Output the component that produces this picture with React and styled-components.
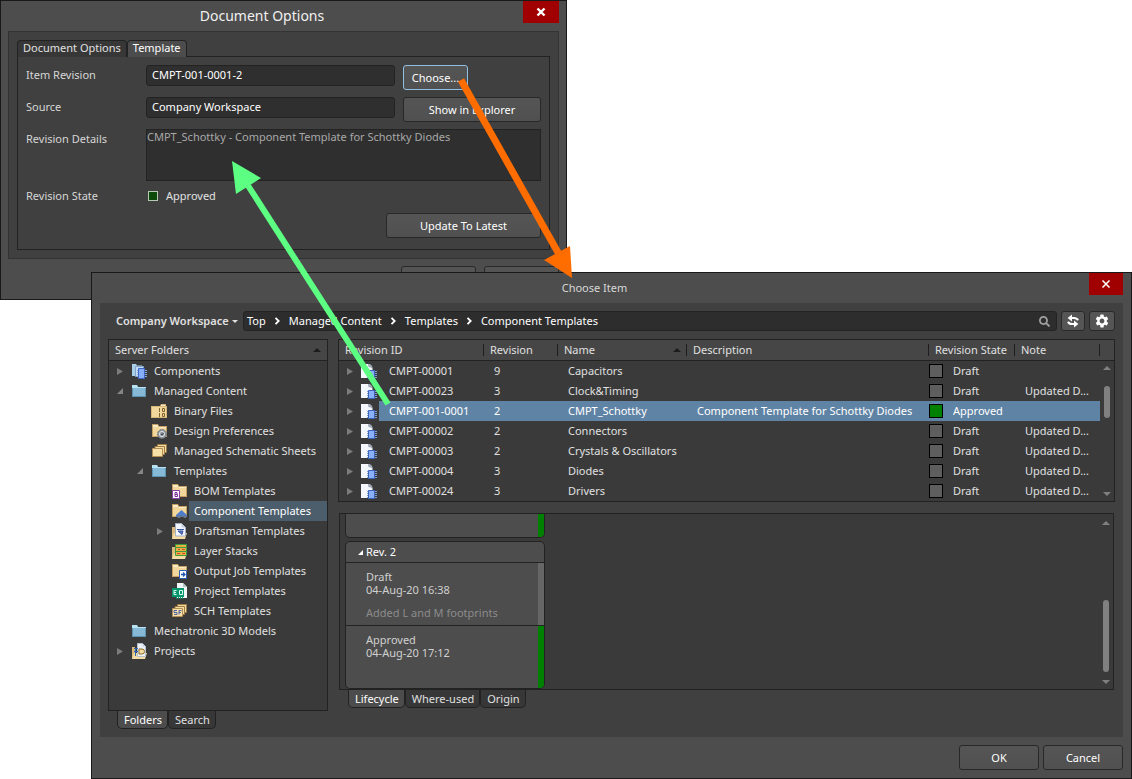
import React from "react";
import styled, { createGlobalStyle } from "styled-components";
import { FaSearch } from "react-icons/fa";
import { MdSettings } from "react-icons/md";

const GlobalStyle = createGlobalStyle`
  * {
    box-sizing: border-box;
  }
  body {
    margin: 0;
    background: #fff;
    color: #e0e0e0;
    font-family: "Noto Sans", "Open Sans", sans-serif;
    font-size: 11px;
    line-height: 14px;
  }
  button, input, textarea {
    font: inherit;
    color: inherit;
    margin: 0;
  }
`;

const Desktop = styled.main`
  position: relative;
  overflow: hidden;
`;

const Dialog = styled.section`
  background: #4d4d4d;
  border: 1px solid #191919;
`;

const OptionsDialog = styled(Dialog)`
  width: 567px;
`;

const ChooseDialog = styled(Dialog)`
  position: relative;
  margin: -28px 0 0 91px;
`;

const TitleBar = styled.header`
  display: flex;
  align-items: flex-start;
  height: 30px;
  padding: 0 ${(p) => p.$right}px 0 ${(p) => p.$left || 0}px;
`;

const Title = styled.h1`
  flex: 1;
  margin: 0;
  text-align: center;
  font-weight: 400;
  font-size: ${(p) => (p.$large ? "14px" : "11px")};
  line-height: 29px;
  color: ${(p) => (p.$large ? "#f0f0f0" : "#d8d8d8")};
`;

const CloseButton = styled.button`
  width: ${(p) => (p.$wide ? "36px" : "34px")};
  height: 22px;
  display: flex;
  align-items: center;
  justify-content: center;
  padding: 0;
  border: 0;
  background: #a00000;
`;

const Panel = styled.div`
  margin: 0 7px;
  padding: 8px;
  background: #404040;
  border: 1px solid #333;
`;

const TabRow = styled.div`
  display: flex;
  padding-left: ${(p) => p.$inset || 0}px;
`;

const Tab = styled.button`
  height: ${(p) => (p.$bottom ? "18px" : "17px")};
  padding: ${(p) => (p.$bottom ? "0 5px 0 6px" : "0 5px 2px")};
  line-height: 14px;
  white-space: nowrap;
  color: ${(p) => (p.$active ? "#fff" : "#e0e0e0")};
  background: ${(p) => (p.$active ? "#4c4c4c" : "#373737")};
  border: 1px solid #222;
  ${(p) =>
    p.$bottom
      ? "border-top: 0; border-radius: 0 0 5px 5px;"
      : "border-bottom: 0; border-radius: 4px 4px 0 0; margin-bottom: -1px;"}
`;

const Form = styled.form`
  display: grid;
  grid-template-columns: 112px 249px 1fr;
  column-gap: 8px;
  row-gap: 7px;
  padding: 8px 8px 11px;
  border: 1px solid #222;
`;

const Label = styled.label`
  line-height: ${(p) => (p.$short ? "16px" : "20px")};
  color: #d6d6d6;
`;

const TextInput = styled.input`
  height: 21px;
  width: 100%;
  padding: 0 5px 2px;
  color: #fff;
  background: #2f2f2f;
  border: 1px solid #232323;
  border-radius: 3px;
`;

const Details = styled.textarea`
  grid-column: 2 / 4;
  display: block;
  width: 100%;
  height: 52px;
  padding: 0;
  resize: none;
  color: #a8a8a8;
  background: #2f2f2f;
  border: 1px solid #232323;
`;

const State = styled.output`
  display: flex;
  align-items: center;
  gap: 8px;
  height: 16px;
  margin-bottom: 2px;
  padding-left: 2px;
`;

const Lamp = styled.span`
  width: 10px;
  height: 10px;
  background: #0c4a0c;
  border: 1px solid #b5c9b5;
`;

const Button = styled.button`
  height: 25px;
  width: ${(p) => (p.$width ? `${p.$width}px` : "100%")};
  padding: 0;
  color: #fff;
  background: linear-gradient(#555, #505050);
  border: 1px solid ${(p) => (p.$focused ? "#8fc0e4" : "#282828")};
  border-radius: 3px;
`;

const WideCell = styled.div`
  grid-column: 2 / 4;
  display: flex;
  justify-content: flex-end;
`;

const Footer = styled.footer`
  display: flex;
  justify-content: flex-end;
  gap: ${(p) => p.$gap}px;
  padding: ${(p) => p.$top}px ${(p) => p.$side}px 8px;
`;

const Browser = styled.div`
  margin: 0 8px;
  padding: 8px;
  background: #404040;
`;

const Toolbar = styled.div`
  display: flex;
  align-items: center;
  gap: 4px;
  height: 20px;
  margin-bottom: 8px;
`;

const WorkspaceButton = styled.button`
  display: flex;
  align-items: center;
  gap: 3px;
  width: 131px;
  padding: 0 0 0 8px;
  border: 0;
  background: none;
  font-weight: 600;
  white-space: nowrap;
`;

const PathBar = styled.nav`
  flex: 1;
  display: flex;
  align-items: center;
  gap: 8px;
  height: 20px;
  padding: 0 6px 0 3px;
  background: #2d2d2d;
  border: 1px solid #242424;
  border-radius: 3px;

  a {
    color: #fff;
    text-decoration: none;
    white-space: nowrap;
  }
`;

const SearchButton = styled.button`
  display: flex;
  margin-left: auto;
  padding: 0;
  border: 0;
  background: none;
  color: #a0a0a0;
`;

const ToolButton = styled.button`
  display: flex;
  align-items: center;
  justify-content: center;
  width: ${(p) => (p.$wide ? "26px" : "24px")};
  height: 20px;
  padding: 0;
  color: #fff;
  background: #555;
  border: 1px solid #292929;
  border-radius: 3px;
`;

const Columns = styled.div`
  display: grid;
  grid-template-columns: 220px minmax(0, 1fr);
  column-gap: 10px;
`;

const Folders = styled.div`
  height: 372px;
  background: #3a3a3a;
  border: 1px solid #222;
`;

const FoldersHeader = styled.div`
  display: flex;
  align-items: center;
  justify-content: space-between;
  height: 21px;
  padding: 0 6px;
  background: #464646;
  border-bottom: 1px solid #222;
`;

const TreeList = styled.ul`
  margin: 0;
  padding: 0;
  list-style: none;
`;

const TreeRow = styled.li`
  display: flex;
  align-items: center;
  height: 20px;
  padding-left: ${(p) => p.$level * 20}px;
`;

const Expander = styled.span`
  flex: none;
  display: flex;
  justify-content: center;
  width: 22px;
`;

const IconSlot = styled.span`
  flex: none;
  display: flex;
  width: 18px;
`;

const TreeLabel = styled.button`
  flex: 1;
  height: 20px;
  padding: 0 0 0 5px;
  border: 0;
  text-align: left;
  white-space: nowrap;
  color: ${(p) => (p.$selected ? "#fff" : "#e0e0e0")};
  background: ${(p) => (p.$selected ? "#4c5d6b" : "none")};
`;

const Grid = styled.div`
  position: relative;
  background: #3a3a3a;
  border: 1px solid #222;
`;

const Table = styled.table`
  width: 100%;
  table-layout: fixed;
  border-collapse: separate;
  border-spacing: 0;
`;

const Th = styled.th`
  height: 21px;
  padding: 0;
  font-weight: 400;
  text-align: left;
  white-space: nowrap;
  background: #464646;
  border-bottom: 1px solid #222;
`;

const HeadText = styled.div`
  display: flex;
  align-items: center;
  justify-content: space-between;
  height: 12px;
  padding: 0 5px 0 6px;
  border-right: 1px solid #1e1e1e;
`;

const Row = styled.tr`
  color: ${(p) => (p.$selected ? "#fff" : "#e0e0e0")};

  td:not(:first-child):not(:last-child) {
    background: ${(p) => (p.$selected ? "#5f83a4" : "none")};
  }
`;

const Td = styled.td`
  height: 20px;
  padding: 0 0 0 10px;
  white-space: nowrap;
`;

const IdCell = styled.td`
  height: 20px;
  padding: 0;
`;

const Line = styled.div`
  display: flex;
  align-items: center;
  gap: ${(p) => p.$gap || 0}px;
  height: 20px;
`;

const IdText = styled.span`
  flex: 1;
  padding-left: 10px;
  line-height: 20px;
  background: ${(p) => (p.$selected ? "#5f83a4" : "none")};
`;

const StateTd = styled(Td)`
  padding-left: 0;
`;

const Swatch = styled.span`
  width: 14px;
  height: 14px;
  border: 1px solid #000;
  background: ${(p) => (p.$approved ? "#008000" : "#5e5e5e")};
`;

const ScrollBar = styled.div`
  position: absolute;
  right: 3px;
  top: ${(p) => p.$top}px;
  bottom: 5px;
  width: 8px;
  display: flex;
  flex-direction: column;
  align-items: center;
`;

const Thumb = styled.div`
  width: 6px;
  height: ${(p) => p.$size}px;
  margin: ${(p) => p.$offset}px 0 auto;
  border-radius: 3px;
  background: #808080;
`;

const Lifecycle = styled.div`
  position: relative;
  height: 177px;
  margin: 11px 1px 0;
  padding-left: 5px;
  background: #3a3a3a;
  border: 1px solid #222;
`;

const Card = styled.article`
  width: 200px;
  overflow: hidden;
  background: #4d4d4d;
  border: 1px solid #222;
  border-radius: 5px;
`;

const CutCard = styled(Card)`
  height: 24px;
  margin-bottom: 3px;
  border-top: 0;
  border-radius: 0 0 5px 5px;
`;

const StatusBar = styled.div`
  width: 6px;
  height: 100%;
  margin-left: auto;
  background: ${(p) => (p.$approved ? "#008000" : "#666")};
`;

const CardTitle = styled.h2`
  display: flex;
  align-items: center;
  gap: 3px;
  height: 20px;
  margin: 0;
  padding-left: 12px;
  font-size: 11px;
  font-weight: 400;
  color: #fff;
`;

const Step = styled.div`
  display: flex;
  height: 63px;
  border-top: 1px solid #222;
`;

const StepText = styled.div`
  padding: 7px 0 0 20px;
  line-height: 13px;
  white-space: nowrap;
  color: #d0d0d0;

  p {
    margin: 0;
  }
  p + p {
    margin-top: 10px;
    color: #8c8c8c;
  }
`;

const Arrows = styled.svg`
  position: absolute;
  top: 0;
  left: 0;
  pointer-events: none;
`;

/* ---------- icons ---------- */

const Close = ({ thick }) => (
  <svg width="10" height="10" viewBox="0 0 10 10">
    <path d="M1.5 1.5l7 7M8.5 1.5l-7 7" stroke="#fff" strokeWidth={thick ? 2.4 : 1.5} />
  </svg>
);

const Up = ({ color = "#1c1c1c" }) => (
  <svg width="8" height="4" viewBox="0 0 8 4"><path d="M0 4L4 0l4 4z" fill={color} /></svg>
);

const Down = ({ color = "#808080", size = 8 }) => (
  <svg width={size} height={size / 2} viewBox="0 0 8 4"><path d="M0 0h8L4 4z" fill={color} /></svg>
);

const Closed = () => (
  <svg width="6" height="7" viewBox="0 0 6 7"><path d="M0 0l6 3.5L0 7z" fill="#7c7c7c" /></svg>
);

const Opened = ({ color = "#858585", size = 6 }) => (
  <svg width={size} height={size} viewBox="0 0 6 6"><path d="M6 0v6H0z" fill={color} /></svg>
);

const Chevron = () => (
  <svg width="7" height="8" viewBox="0 0 7 8">
    <path d="M1.5.8L4.7 4 1.5 7.2" fill="none" stroke="#fff" strokeWidth="1.8" />
  </svg>
);

const Sync = () => (
  <svg width="14" height="14" viewBox="0 0 14 14">
    <path d="M5 4h3c2 0 3.200.6 4 2.300M9 10H6c-2 0-3.200-.6-4-2.300" fill="none" stroke="#fff" strokeWidth="2" />
    <path d="M6 .6v6.800L1.600 4zM8 6.600v6.800L12.400 10z" fill="#fff" />
  </svg>
);

const RevisionIcon = () => (
  <svg width="17" height="17" viewBox="0 0 17 17">
    <path d="M0 1h7c2.500 0 4.500 2 4.500 4.500V15H0z" fill="#f4f7fb" />
    <path d="M7 1c2.500 0 4.500 2 4.500 5-.8-1.300-2-2-4-2z" fill="#9aa4b5" />
    <path d="M6 8.500h10M6 10.500h10M6 12.500h10M6 14.500h10" stroke="#7f9bd6" />
    <path d="M7.500 7.500h6v8h-6z" fill="#8ab0f7" stroke="#3b63bb" />
  </svg>
);

const TanFolder = () => (
  <>
    <path d="M1 1h6l1 2h8v11H1z" fill="#c4a063" />
    <path d="M2 2h4.500l1 2H15v9H2z" fill="#f2d79c" />
    <path d="M2 2h4.500l1 2H2zM8 4h7v1H8z" fill="#faecc8" />
  </>
);

const OpenFolder = () => (
  <>
    <path d="M1 4h3v10h10v2H1z" fill="#d9b87a" />
    <path d="M1 16l2-6h13l-2 6z" fill="#f5dca2" />
  </>
);

const SheetStack = () => (
  <>
    <path d="M6.500 1.500h9v8h-9z" fill="#f4dba2" stroke="#a07c45" />
    <path d="M4 3.500h9.500v8H4z" fill="#f4dba2" stroke="#a07c45" />
    <path d="M1.500 5.500h10v8h-10z" fill="#f7dfa8" stroke="#b18f55" />
  </>
);

const pictures = {
  components: (
    <>
      <path d="M1 1h4l1 1.500h5V13H1z" fill="#a9cfe6" />
      <path d="M4.500 3.500h8v10h-8z" fill="#c4dcf2" stroke="#7fa6cc" />
      <path d="M6 7.500h10M6 9.500h10M6 11.500h10M6 13.500h10" stroke="#8ba7dc" />
      <path d="M7.500 5.500h6v10h-6z" fill="#86adf8" stroke="#3f66c6" />
    </>
  ),
  blue: (
    <>
      <path d="M1 2h5l1 2h8v10H1z" fill="#5b93b3" />
      <path d="M2 5h12v8H2z" fill="#86b9d6" />
      <path d="M1 2h5l1 2h8v1H1z" fill="#b7e0f0" />
    </>
  ),
  binary: (
    <>
      <path d="M0 3h9l1-2h5v2h1v12H0z" fill="#d6b779" />
      <path d="M1 4h14v10H1z" fill="#f2d79c" />
      <path d="M10 2h4v1h-4z" fill="#faecc8" />
      <path d="M8.500 5v4M11.500 5.500h2v3h-2zM8.500 10v4M11.500 10.500h2v3h-2z" fill="none" stroke="#80642f" />
    </>
  ),
  prefs: (
    <>
      <TanFolder />
      <circle cx="11" cy="11" r="4.500" fill="#8d939a" stroke="#6d747c" strokeDasharray="2 1" />
      <circle cx="11" cy="11" r="2.600" fill="#8d939a" stroke="#dce1e6" />
      <path d="M10 11l1 1 1.500-2" fill="none" stroke="#444" />
    </>
  ),
  sheets: <SheetStack />,
  bom: (
    <>
      <TanFolder />
      <path d="M1.500 7.500h7v8h-7z" fill="#fff" stroke="#8b3fa5" />
      <path d="M4 9.500h2v2H4h2.500v2H4z" fill="none" stroke="#7b2e98" />
    </>
  ),
  component: (
    <>
      <TanFolder />
      <path d="M5 12l5.500-5 5.500 5v2H5z" fill="#4d7ccf" />
      <path d="M5 12.500l2 2.500h2l1-1.500 2 0 1 1.500h2l1-2.500" fill="#6b7688" />
    </>
  ),
  draftsman: (
    <>
      <OpenFolder />
      <path d="M4.500.5h6l4 4v8.500h-10z" fill="#f3f6fc" stroke="#a5b1c5" />
      <path d="M10.500.5v4h4" fill="#c9d3e2" />
      <path d="M6 6.500h7M7 8h5l-1 3.500z" fill="#5a76bd" stroke="#3955a1" />
    </>
  ),
  layers: (
    <>
      <OpenFolder />
      <path d="M4.500 1.500h11v11h-11z" fill="#e9b044" stroke="#3d9b3f" />
      <path d="M4 4.500h12M4 8.500h12" stroke="#3d9b3f" />
      <path d="M7 6.500h2M11 6.500h3M6 10.500h3M11 10.500h3" stroke="#d1492f" />
    </>
  ),
  output: (
    <>
      <TanFolder />
      <path d="M8.500 7.500h7v8h-7z" fill="#fff" stroke="#2c5fb8" />
      <path d="M10 11.500h4M12 9.500l2 2-2 2" fill="none" stroke="#2457b3" strokeWidth="1.300" />
    </>
  ),
  project: (
    <>
      <path d="M6 0h6l4 4v11H6z" fill="#f3f6f8" />
      <path d="M12 0v4h4z" fill="#b4c6ca" />
      <path d="M1 5h12v9H1z" fill="#07966c" />
      <path d="M5.500 7.500H3v4h2.500M3 9.500h2M8.500 7.500h3v4h-3z" fill="none" stroke="#d9fff2" />
      <path d="M5 15h8" stroke="#07966c" strokeDasharray="1 1" strokeWidth="2" />
    </>
  ),
  sch: (
    <>
      <SheetStack />
      <path d="M6 7.500H3v2h3v2H3M8 11.500v-4h2.500M8 9.500h2" fill="none" stroke="#4c63a4" />
    </>
  ),
  projects: (
    <>
      <OpenFolder />
      <path d="M6.500.5h5l3 3v10h-8z" fill="#edf2f8" stroke="#b7c2d0" />
      <path d="M11.500.5v3h3" fill="#c9d3e2" />
      <path d="M3 5.500h4M3 8.500h4M4.500 5v8" stroke="#2b65b4" />
      <path d="M8 6h3a2.500 2.500 0 010 5H8z" fill="#f5dca2" stroke="#8d6b28" />
    </>
  ),
};

const TreeIcon = ({ kind }) => (
  <svg width="17" height="17" viewBox="0 0 17 17">{pictures[kind]}</svg>
);

/* ---------- data ---------- */

const folders = [
  { name: "Components", icon: "components", level: 0, state: "closed" },
  { name: "Managed Content", icon: "blue", level: 0, state: "open" },
  { name: "Binary Files", icon: "binary", level: 1 },
  { name: "Design Preferences", icon: "prefs", level: 1 },
  { name: "Managed Schematic Sheets", icon: "sheets", level: 1 },
  { name: "Templates", icon: "blue", level: 1, state: "open" },
  { name: "BOM Templates", icon: "bom", level: 2 },
  { name: "Component Templates", icon: "component", level: 2, selected: true },
  { name: "Draftsman Templates", icon: "draftsman", level: 2, state: "closed" },
  { name: "Layer Stacks", icon: "layers", level: 2 },
  { name: "Output Job Templates", icon: "output", level: 2 },
  { name: "Project Templates", icon: "project", level: 2 },
  { name: "SCH Templates", icon: "sch", level: 2 },
  { name: "Mechatronic 3D Models", icon: "blue", level: 0 },
  { name: "Projects", icon: "projects", level: 0, state: "closed" },
];

const items = [
  { id: "CMPT-00001", rev: 9, name: "Capacitors", state: "Draft" },
  { id: "CMPT-00023", rev: 3, name: "Clock&Timing", state: "Draft", note: "Updated D..." },
  {
    id: "CMPT-001-0001",
    rev: 2,
    name: "CMPT_Schottky",
    description: "Component Template for Schottky Diodes",
    state: "Approved",
    selected: true,
  },
  { id: "CMPT-00002", rev: 2, name: "Connectors", state: "Draft", note: "Updated D..." },
  { id: "CMPT-00003", rev: 2, name: "Crystals & Oscillators", state: "Draft", note: "Updated D..." },
  { id: "CMPT-00004", rev: 3, name: "Diodes", state: "Draft", note: "Updated D..." },
  { id: "CMPT-00024", rev: 3, name: "Drivers", state: "Draft", note: "Updated D..." },
];

const path = ["Top", "Managed Content", "Templates", "Component Templates"];

/* ---------- dialogs ---------- */

const DocumentOptions = () => (
  <OptionsDialog>
    <TitleBar $right={7}>
      <Title $large>Document Options</Title>
      <CloseButton $wide aria-label="Close"><Close thick /></CloseButton>
    </TitleBar>
    <Panel>
      <TabRow>
        <Tab $active={false}>Document Options</Tab>
        <Tab $active>Template</Tab>
      </TabRow>
      <Form onSubmit={(e) => e.preventDefault()}>
        <Label htmlFor="revision">Item Revision</Label>
        <TextInput id="revision" defaultValue="CMPT-001-0001-2" />
        <Button type="button" $width={65} $focused>Choose...</Button>
        <Label htmlFor="source">Source</Label>
        <TextInput id="source" defaultValue="Company Workspace" />
        <Button type="button">Show in Explorer</Button>
        <Label htmlFor="details">Revision Details</Label>
        <Details id="details" defaultValue="CMPT_Schottky - Component Template for Schottky Diodes" />
        <Label htmlFor="state" $short>Revision State</Label>
        <State id="state"><Lamp />Approved</State>
        <span />
        <span />
        <WideCell>
          <Button type="button" $width={155}>Update To Latest</Button>
        </WideCell>
      </Form>
    </Panel>
    <Footer $gap={8} $top={7} $side={7}>
      <Button $width={75} aria-label="OK" />
      <Button $width={75} aria-label="Cancel" />
    </Footer>
  </OptionsDialog>
);

const FolderTree = () => (
  <div>
    <Folders>
      <FoldersHeader>Server Folders<Up /></FoldersHeader>
      <TreeList>
        {folders.map((f) => (
          <TreeRow key={f.name} $level={f.level}>
            <Expander>
              {f.state === "closed" && <Closed />}
              {f.state === "open" && <Opened />}
            </Expander>
            <IconSlot><TreeIcon kind={f.icon} /></IconSlot>
            <TreeLabel $selected={f.selected}>{f.name}</TreeLabel>
          </TreeRow>
        ))}
      </TreeList>
    </Folders>
    <TabRow $inset={9}>
      <Tab $bottom $active>Folders</Tab>
      <Tab $bottom>Search</Tab>
    </TabRow>
  </div>
);

const ItemTable = () => (
  <Grid>
    <Table>
      <colgroup>
        <col style={{ width: 145 }} />
        <col style={{ width: 74 }} />
        <col style={{ width: 129 }} />
        <col />
        <col style={{ width: 86 }} />
        <col style={{ width: 85 }} />
        <col style={{ width: 14 }} />
      </colgroup>
      <thead>
        <tr>
          <Th><HeadText>Revision ID</HeadText></Th>
          <Th><HeadText>Revision</HeadText></Th>
          <Th><HeadText>Name<Up /></HeadText></Th>
          <Th><HeadText>Description</HeadText></Th>
          <Th><HeadText>Revision State</HeadText></Th>
          <Th><HeadText>Note</HeadText></Th>
          <Th />
        </tr>
      </thead>
      <tbody>
        {items.map((item) => (
          <Row key={item.id} $selected={item.selected}>
            <IdCell>
              <Line>
                <Expander><Closed /></Expander>
                <IconSlot><RevisionIcon /></IconSlot>
                <IdText $selected={item.selected}>{item.id}</IdText>
              </Line>
            </IdCell>
            <Td>{item.rev}</Td>
            <Td>{item.name}</Td>
            <Td>{item.description}</Td>
            <StateTd>
              <Line $gap={10}>
                <Swatch $approved={item.state === "Approved"} />
                {item.state}
              </Line>
            </StateTd>
            <Td>{item.note}</Td>
            <td />
          </Row>
        ))}
      </tbody>
    </Table>
    <ScrollBar $top={26}>
      <Up color="#808080" />
      <Thumb $offset={16} $size={32} />
      <Down />
    </ScrollBar>
  </Grid>
);

const LifecyclePanel = () => (
  <>
    <Lifecycle>
      <CutCard><StatusBar $approved /></CutCard>
      <Card>
        <CardTitle><Opened color="#fff" size={5} />Rev. 2</CardTitle>
        <Step>
          <StepText>
            <p>Draft<br />04-Aug-20 16:38</p>
            <p>Added L and M footprints</p>
          </StepText>
          <StatusBar />
        </Step>
        <Step>
          <StepText>
            <p>Approved<br />04-Aug-20 17:12</p>
          </StepText>
          <StatusBar $approved />
        </Step>
      </Card>
      <ScrollBar $top={7}>
        <Up color="#808080" />
        <Thumb $offset={75} $size={72} />
        <Down />
      </ScrollBar>
    </Lifecycle>
    <TabRow $inset={10}>
      <Tab $bottom $active>Lifecycle</Tab>
      <Tab $bottom>Where-used</Tab>
      <Tab $bottom>Origin</Tab>
    </TabRow>
  </>
);

const ChooseItem = () => (
  <ChooseDialog>
    <TitleBar $left={8} $right={8}>
      <Title>Choose Item</Title>
      <CloseButton aria-label="Close"><Close /></CloseButton>
    </TitleBar>
    <Browser>
      <Toolbar>
        <WorkspaceButton>
          Company Workspace<Down color="#e0e0e0" size={6} />
        </WorkspaceButton>
        <PathBar>
          {path.map((name, i) => (
            <React.Fragment key={name}>
              {i > 0 && <Chevron />}
              <a href="#">{name}</a>
            </React.Fragment>
          ))}
          <SearchButton aria-label="Search"><FaSearch size={11} /></SearchButton>
        </PathBar>
        <ToolButton aria-label="Refresh"><Sync /></ToolButton>
        <ToolButton $wide aria-label="Settings"><MdSettings size={16} /></ToolButton>
      </Toolbar>
      <Columns>
        <FolderTree />
        <div>
          <ItemTable />
          <LifecyclePanel />
        </div>
      </Columns>
    </Browser>
    <Footer $gap={4} $top={8} $side={8}>
      <Button $width={80}>OK</Button>
      <Button $width={80}>Cancel</Button>
    </Footer>
  </ChooseDialog>
);

export default () => (
  <Desktop>
    <GlobalStyle />
    <DocumentOptions />
    <ChooseItem />
    <Arrows width="600" height="420" viewBox="0 0 600 420">
      <path d="M461 80L560 256" stroke="#ff6c00" strokeWidth="7" />
      <path d="M544 260l26-14 2 32z" fill="#ff6c00" />
      <path d="M388 404L247 184" stroke="#5cff82" strokeWidth="6" />
      <path d="M232 161l29 17-25 16z" fill="#5cff82" />
    </Arrows>
  </Desktop>
);
